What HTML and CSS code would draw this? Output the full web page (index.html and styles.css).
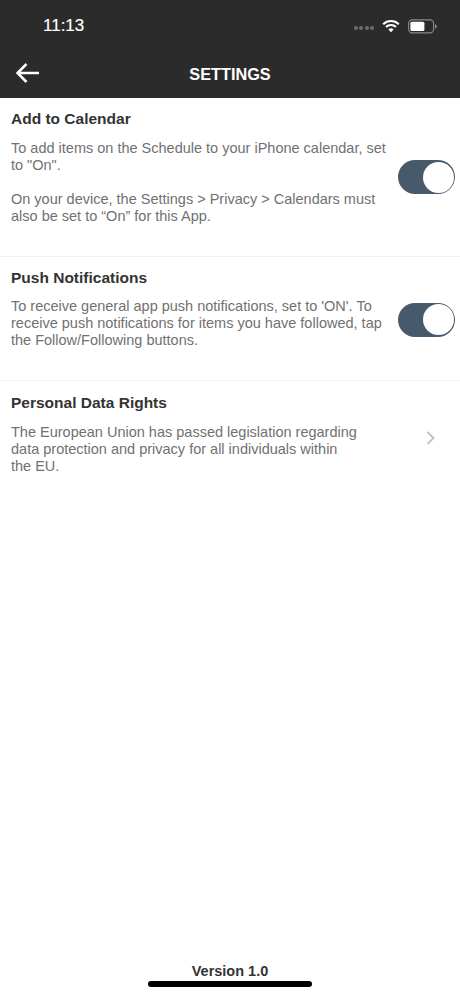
FILE: index.html
```html
<!DOCTYPE html>
<html lang="en">
<head>
<meta charset="utf-8">
<title>Settings</title>
<link rel="stylesheet" href="styles.css">
</head>
<body>
<div class="screen">
  <header class="header">
    <div class="status">
      <span class="time">11:13</span>
      <div class="status-icons">
        <span class="dots"><i></i><i></i><i></i><i></i></span>
        <svg class="wifi" width="18" height="14" viewBox="0 0 18 14"><path d="M1.2 5.2a11.2 11.2 0 0 1 15.6 0" fill="none" stroke="#fff" stroke-width="2.1"/><path d="M4 8a7.2 7.2 0 0 1 10 0" fill="none" stroke="#fff" stroke-width="2.1"/><path d="M6.4 10.6 9 13.2l2.6-2.6a3.7 3.7 0 0 0-5.2 0z" fill="#fff"/></svg>
        <svg class="battery" width="30" height="15" viewBox="0 0 30 15"><rect x="0.6" y="0.9" width="25" height="13" rx="3.6" fill="none" stroke="#8a8a8a" stroke-width="1.1"/><rect x="2.4" y="2.7" width="14" height="9.4" rx="1.6" fill="#fff"/><path d="M27 5.2c1.2.3 1.9 1.2 1.9 2.2S28.200 9.300 27 9.600z" fill="#8a8a8a"/></svg>
      </div>
    </div>
    <div class="navbar">
      <svg class="back" width="26" height="22" viewBox="0 0 26 22"><path d="M24 11H2.500M11.500 2 2.500 11l9 9" fill="none" stroke="#fff" stroke-width="2.500"/></svg>
      <h1 class="title">SETTINGS</h1>
    </div>
  </header>
  <main class="content">
    <section class="row row-calendar">
      <h2 class="row-title">Add to Calendar</h2>
      <div class="row-body">
        <div class="row-text">
          <p>To add items on the Schedule to your iPhone calendar, set to "On".</p>
          <p class="gap">On your device, the Settings &gt; Privacy &gt; Calendars must also be set to “On” for this App.</p>
        </div>
        <span class="toggle"></span>
      </div>
    </section>
    <section class="row row-push">
      <h2 class="row-title">Push Notifications</h2>
      <div class="row-body">
        <div class="row-text">
          <p>To receive general app push notifications, set to 'ON'. To receive push notifications for items you have followed, tap the Follow/Following buttons.</p>
        </div>
        <span class="toggle"></span>
      </div>
    </section>
    <section class="row row-data">
      <h2 class="row-title">Personal Data Rights</h2>
      <div class="row-body">
        <div class="row-text narrow">
          <p>The European Union has passed legislation regarding data protection and privacy for all individuals within the EU.</p>
        </div>
        <svg class="chevron" width="10" height="16" viewBox="0 0 10 16"><path d="M1.500 2 7.500 8l-6 6" fill="none" stroke="#c4c4c4" stroke-width="2"/></svg>
      </div>
    </section>
  </main>
  <footer class="footer">
    <span class="version">Version 1.0</span>
    <span class="home"></span>
  </footer>
</div>
</body>
</html>
```
FILE: styles.css
```css
* { box-sizing: border-box; }
html, body { margin: 0; padding: 0; }
body { background: #fff; font-family: "Liberation Sans", Arial, sans-serif; }
.screen { width: 460px; height: 996px; display: flex; flex-direction: column; overflow: hidden; }
.header { height: 98px; background: #2b2b2b; color: #fff; flex: none; }
.status { height: 50px; display: flex; justify-content: space-between; align-items: center; padding: 2px 24px 0 43px; }
.time { font-size: 17px; font-weight: 400; -webkit-text-stroke: 0.2px #fff; }
.status-icons { display: flex; align-items: center; }
.dots { display: flex; gap: 1.500px; margin: 4px 8px 0 0; }
.dots i { width: 4px; height: 4px; border-radius: 50%; background: #6e6e6e; }
.wifi { margin-right: 8px; }
.battery { margin-right: -2px; }
.navbar { height: 48px; display: flex; align-items: center; justify-content: center; position: relative; }
.back { position: absolute; left: 15px; top: 12px; }
.title { margin: 0; font-size: 16.300px; font-weight: 700; }
.content { flex: 1; display: flex; flex-direction: column; }
.row { padding: 12px 5px 0 11px; border-bottom: 1px solid #f1f1f1; }
.row-calendar { height: 159px; }
.row-calendar .row-title { margin-bottom: 12px; }
.row-calendar .toggle { margin-bottom: 11px; }
.row-push { height: 124px; border-bottom-color: #f6f6f6; }
.row-data { border-bottom: 0; padding-top: 13px; }
.row-data .row-title { margin-bottom: 12px; }
.row-title { margin: 0 0 11px; font-size: 15.500px; line-height: 18px; font-weight: 700; color: #333; }
.row-body { display: flex; align-items: center; justify-content: space-between; }
.row-text { width: 380px; font-size: 14.500px; line-height: 17px; color: #717171; }
.row-text.narrow { width: 346px; }
.row-text p { margin: 0; }
.row-text .gap { margin-top: 17px; }
.toggle { width: 57px; height: 34px; border-radius: 17px; background: #475a6c; position: relative; flex: none; margin-bottom: 8px; }
.toggle::after { content: ""; position: absolute; right: 1.500px; top: 1.500px; width: 31px; height: 31px; border-radius: 50%; background: #fff; }
.chevron { align-self: flex-start; margin: 6px 19px 0 0; }
.footer { flex: none; height: 37px; display: flex; flex-direction: column; align-items: center; padding-top: 4px; }
.version { font-size: 14.500px; line-height: 17px; font-weight: 700; color: #333; }
.home { width: 164px; height: 6px; border-radius: 3px; background: #000; margin-top: 1px; }
```
